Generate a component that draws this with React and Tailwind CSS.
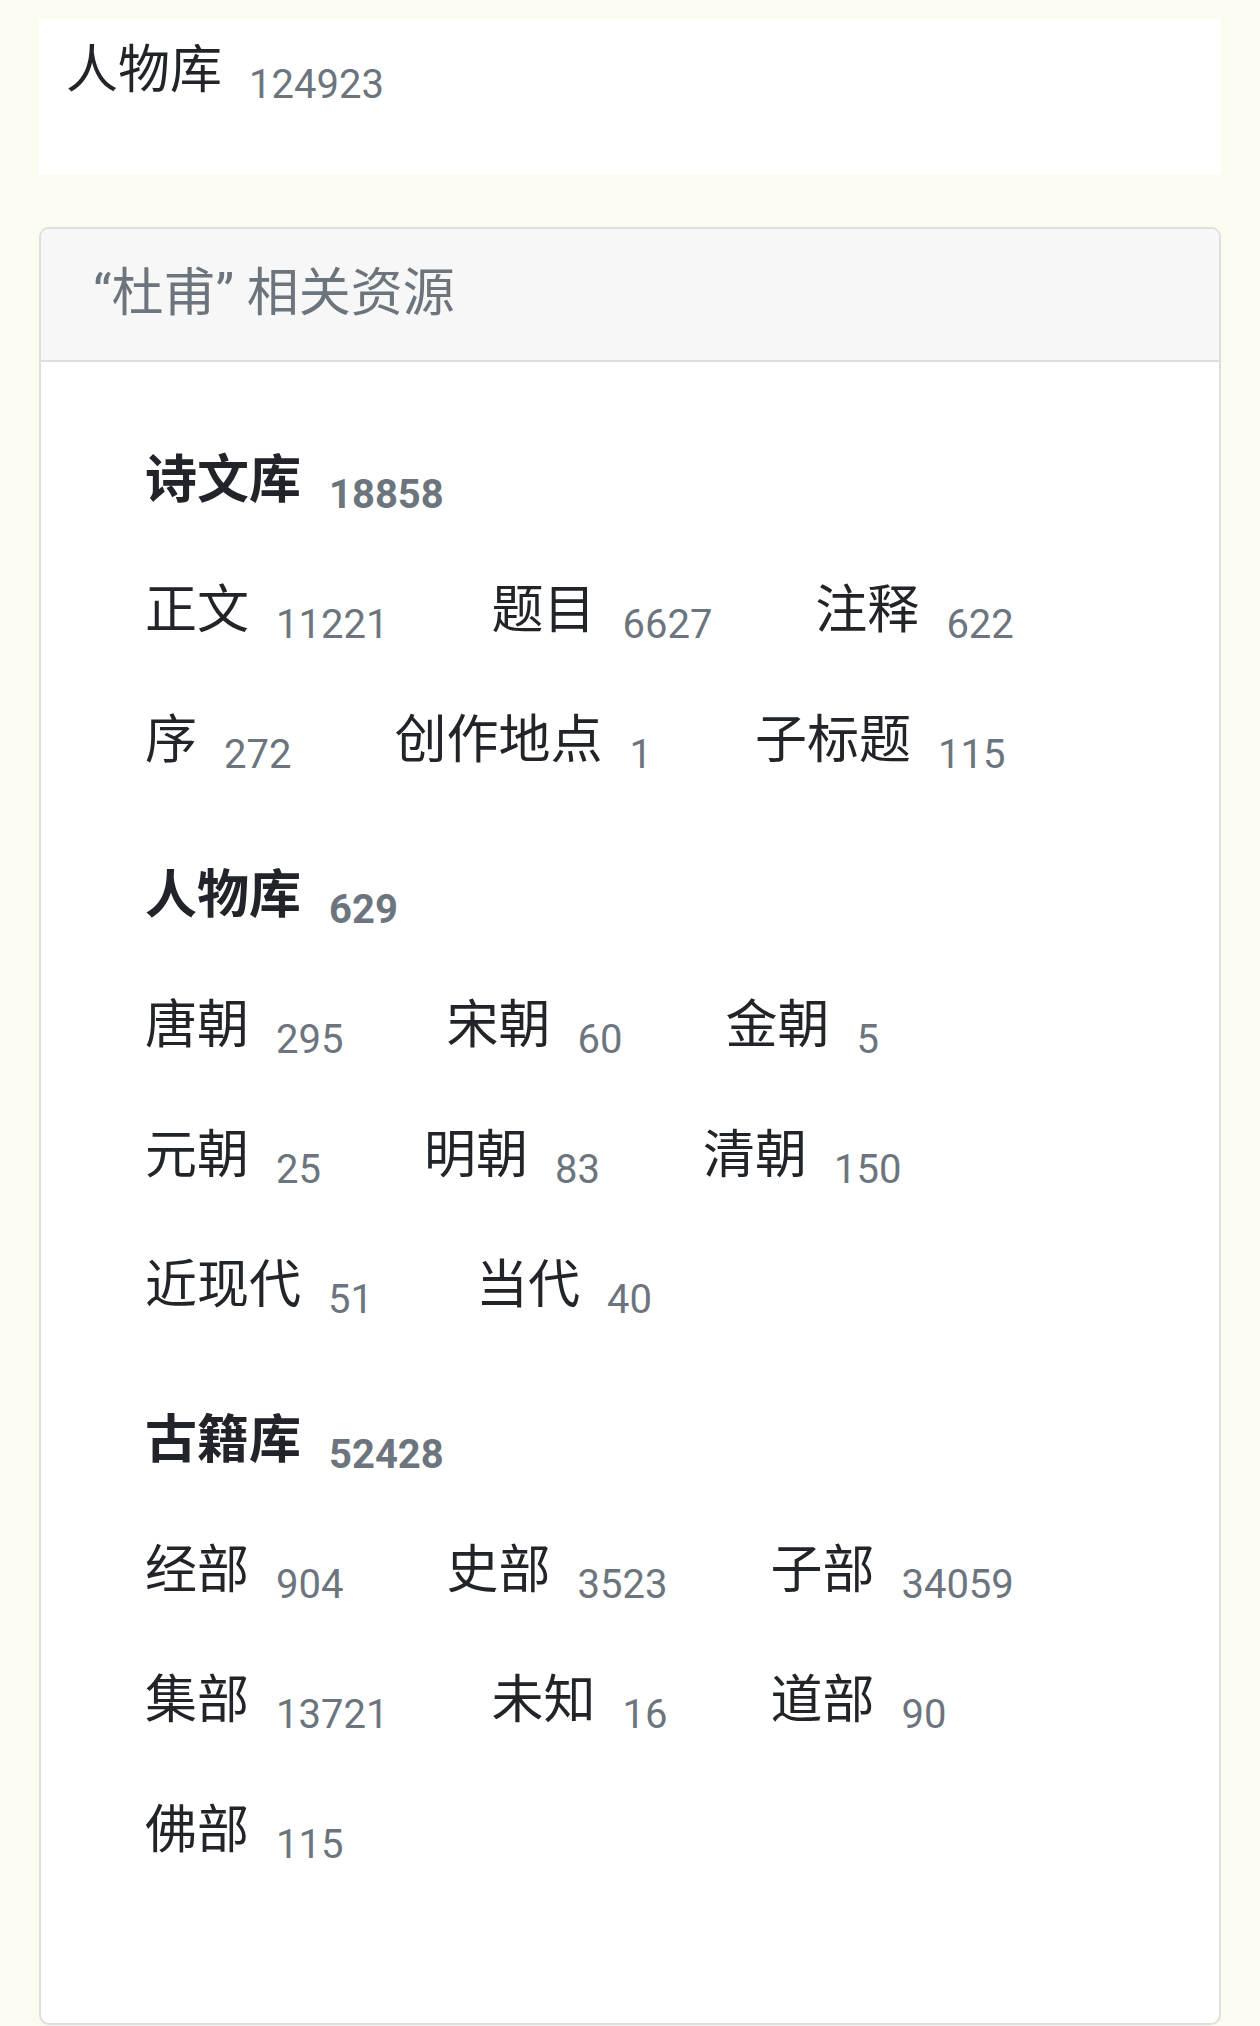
const libraries = [
  {
    name: "诗文库",
    total: 18858,
    rows: [
      [["正文", 11221], ["题目", 6627], ["注释", 622]],
      [["序", 272], ["创作地点", 1], ["子标题", 115]],
    ],
  },
  {
    name: "人物库",
    total: 629,
    rows: [
      [["唐朝", 295], ["宋朝", 60], ["金朝", 5]],
      [["元朝", 25], ["明朝", 83], ["清朝", 150]],
      [["近现代", 51], ["当代", 40]],
    ],
  },
  {
    name: "古籍库",
    total: 52428,
    rows: [
      [["经部", 904], ["史部", 3523], ["子部", 34059]],
      [["集部", 13721], ["未知", 16], ["道部", 90]],
      [["佛部", 115]],
    ],
  },
];

const Entry = ({ label, count, bold }) => (
  <a href="#" className="flex items-baseline">
    <span className={`text-[52px] leading-[52px] text-[#212529] ${bold ? "font-bold" : "font-normal"}`}>
      {label}
    </span>
    <span
      className={`relative top-[10px] text-[40px] leading-[40px] text-[#6c757d] ${bold ? "ml-[28px] font-bold" : "ml-[27px] font-normal"}`}
    >
      {count}
    </span>
  </a>
);

export default function App() {
  return (
    <div className="min-h-screen bg-[#fbfbf0] px-[39px] pt-[19px] font-['Roboto','Noto_Sans_CJK_SC',sans-serif]">
      <div className="h-[156px] bg-white pl-[27px] pt-[26px]">
        <Entry label="人物库" count={124923} />
      </div>

      <div className="mt-[52px] rounded-[10px] border-2 border-[#dedede] bg-white">
        <div className="h-[133px] rounded-t-[8px] border-b-2 border-[#dedede] bg-[#f7f7f7] pl-[52px] pt-[39px] text-[52px] leading-[52px] text-[#6c757d]">
          “杜甫” 相关资源
        </div>

        <div className="pl-[104px] pt-[93px] pb-[166px]">
          {libraries.map((lib, i) => (
            <section key={lib.name} className={i > 0 ? "mt-[103px]" : ""}>
              <Entry label={lib.name} count={lib.total} bold />
              {lib.rows.map((row, r) => (
                <div key={r} className="mt-[78px] flex gap-x-[103px]">
                  {row.map(([label, count]) => (
                    <Entry key={label} label={label} count={count} />
                  ))}
                </div>
              ))}
            </section>
          ))}
        </div>
      </div>
    </div>
  );
}
